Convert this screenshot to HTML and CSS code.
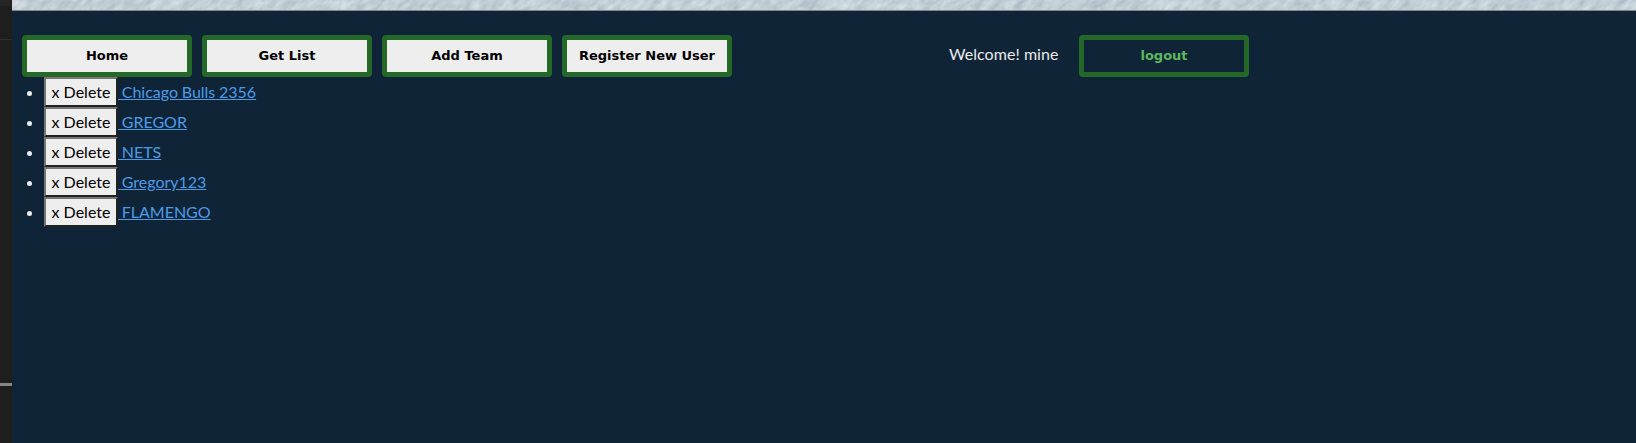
FILE: index.html
```
<!DOCTYPE html>
<html lang="en">
<head>
<meta charset="utf-8">
<title>Teams</title>
<link rel="stylesheet" href="styles.css">
</head>
<body>
<aside class="edge"><div class="edge-top"></div><div class="edge-middle"></div><div class="edge-bottom"></div></aside>
<main class="page">
  <svg class="banner" aria-hidden="true">
    <filter id="frost" x="0" y="0" width="100%" height="100%" color-interpolation-filters="sRGB">
      <feTurbulence type="fractalNoise" baseFrequency="0.12 0.1" numOctaves="4" seed="8"/>
      <feColorMatrix values="0.23 0 0 0 0.65  0.21 0 0 0 0.7  0.19 0 0 0 0.745  0 0 0 0 1"/>
    </filter>
    <rect x="-30" y="-1000" width="1700" height="1050" transform="skewX(-35)" filter="url(#frost)"/>
  </svg>
  <nav class="nav">
    <button class="nav-button">Home</button>
    <button class="nav-button">Get List</button>
    <button class="nav-button">Add Team</button>
    <button class="nav-button">Register New User</button>
    <span class="welcome">Welcome! mine</span>
    <button class="nav-button logout">logout</button>
  </nav>
  <ul class="teams">
    <li><button class="delete">x Delete</button><a href="#">&nbsp;Chicago Bulls 2356</a></li>
    <li><button class="delete">x Delete</button><a href="#">&nbsp;GREGOR</a></li>
    <li><button class="delete">x Delete</button><a href="#">&nbsp;NETS</a></li>
    <li><button class="delete">x Delete</button><a href="#">&nbsp;Gregory123</a></li>
    <li><button class="delete">x Delete</button><a href="#">&nbsp;FLAMENGO</a></li>
  </ul>
</main>
</body>
</html>
```
FILE: styles.css
```
* { box-sizing: border-box; }
body {
  margin: 0;
  height: 443px;
  display: flex;
  overflow: hidden;
  background: #102437;
  color: #ebebeb;
  font: 16px/24px Lato, sans-serif;
}
.edge {
  width: 12px;
  flex: none;
  display: flex;
  flex-direction: column;
  background: #1e1e1e;
}
.edge-top { height: 6px; background: #252526; }
.edge-middle { height: 344px; margin-top: 33px; border-top: 1px solid #303031; }
.edge-bottom { flex: 1; border-top: 3px solid #858585; }
.page { flex: 1; min-width: 0; }
.banner {
  display: block;
  width: 100%;
  height: 11px;
  background: #c3d0d9;
  border-bottom: 1px solid #858585;
}
.nav {
  display: flex;
  align-items: center;
  gap: 10px;
  padding: 24px 0 0 10px;
}
.nav-button {
  width: 170px;
  height: 42px;
  flex: none;
  padding: 0;
  border: 5px solid #256929;
  border-radius: 4px;
  background: #eee;
  color: #000;
  font: bold 13px/16px "DejaVu Sans", sans-serif;
}
.welcome {
  width: 120px;
  margin-left: 207px;
  padding-bottom: 4px;
  letter-spacing: 0.05px;
  white-space: nowrap;
}
.logout { background: transparent; color: #5cb85c; }
.teams { margin: 0; padding: 0 0 0 32px; }
.teams li { height: 30px; line-height: 30px; }
.delete {
  height: 30px;
  width: 74px;
  padding: 0;
  vertical-align: top;
  border: 2px solid;
  border-color: #767676 #212121 #212121 #767676;
  background: #eee;
  color: #000;
  font: 16px/24px Lato, sans-serif;
}
.teams a { color: #4c9be8; word-spacing: -0.4px; }
```
